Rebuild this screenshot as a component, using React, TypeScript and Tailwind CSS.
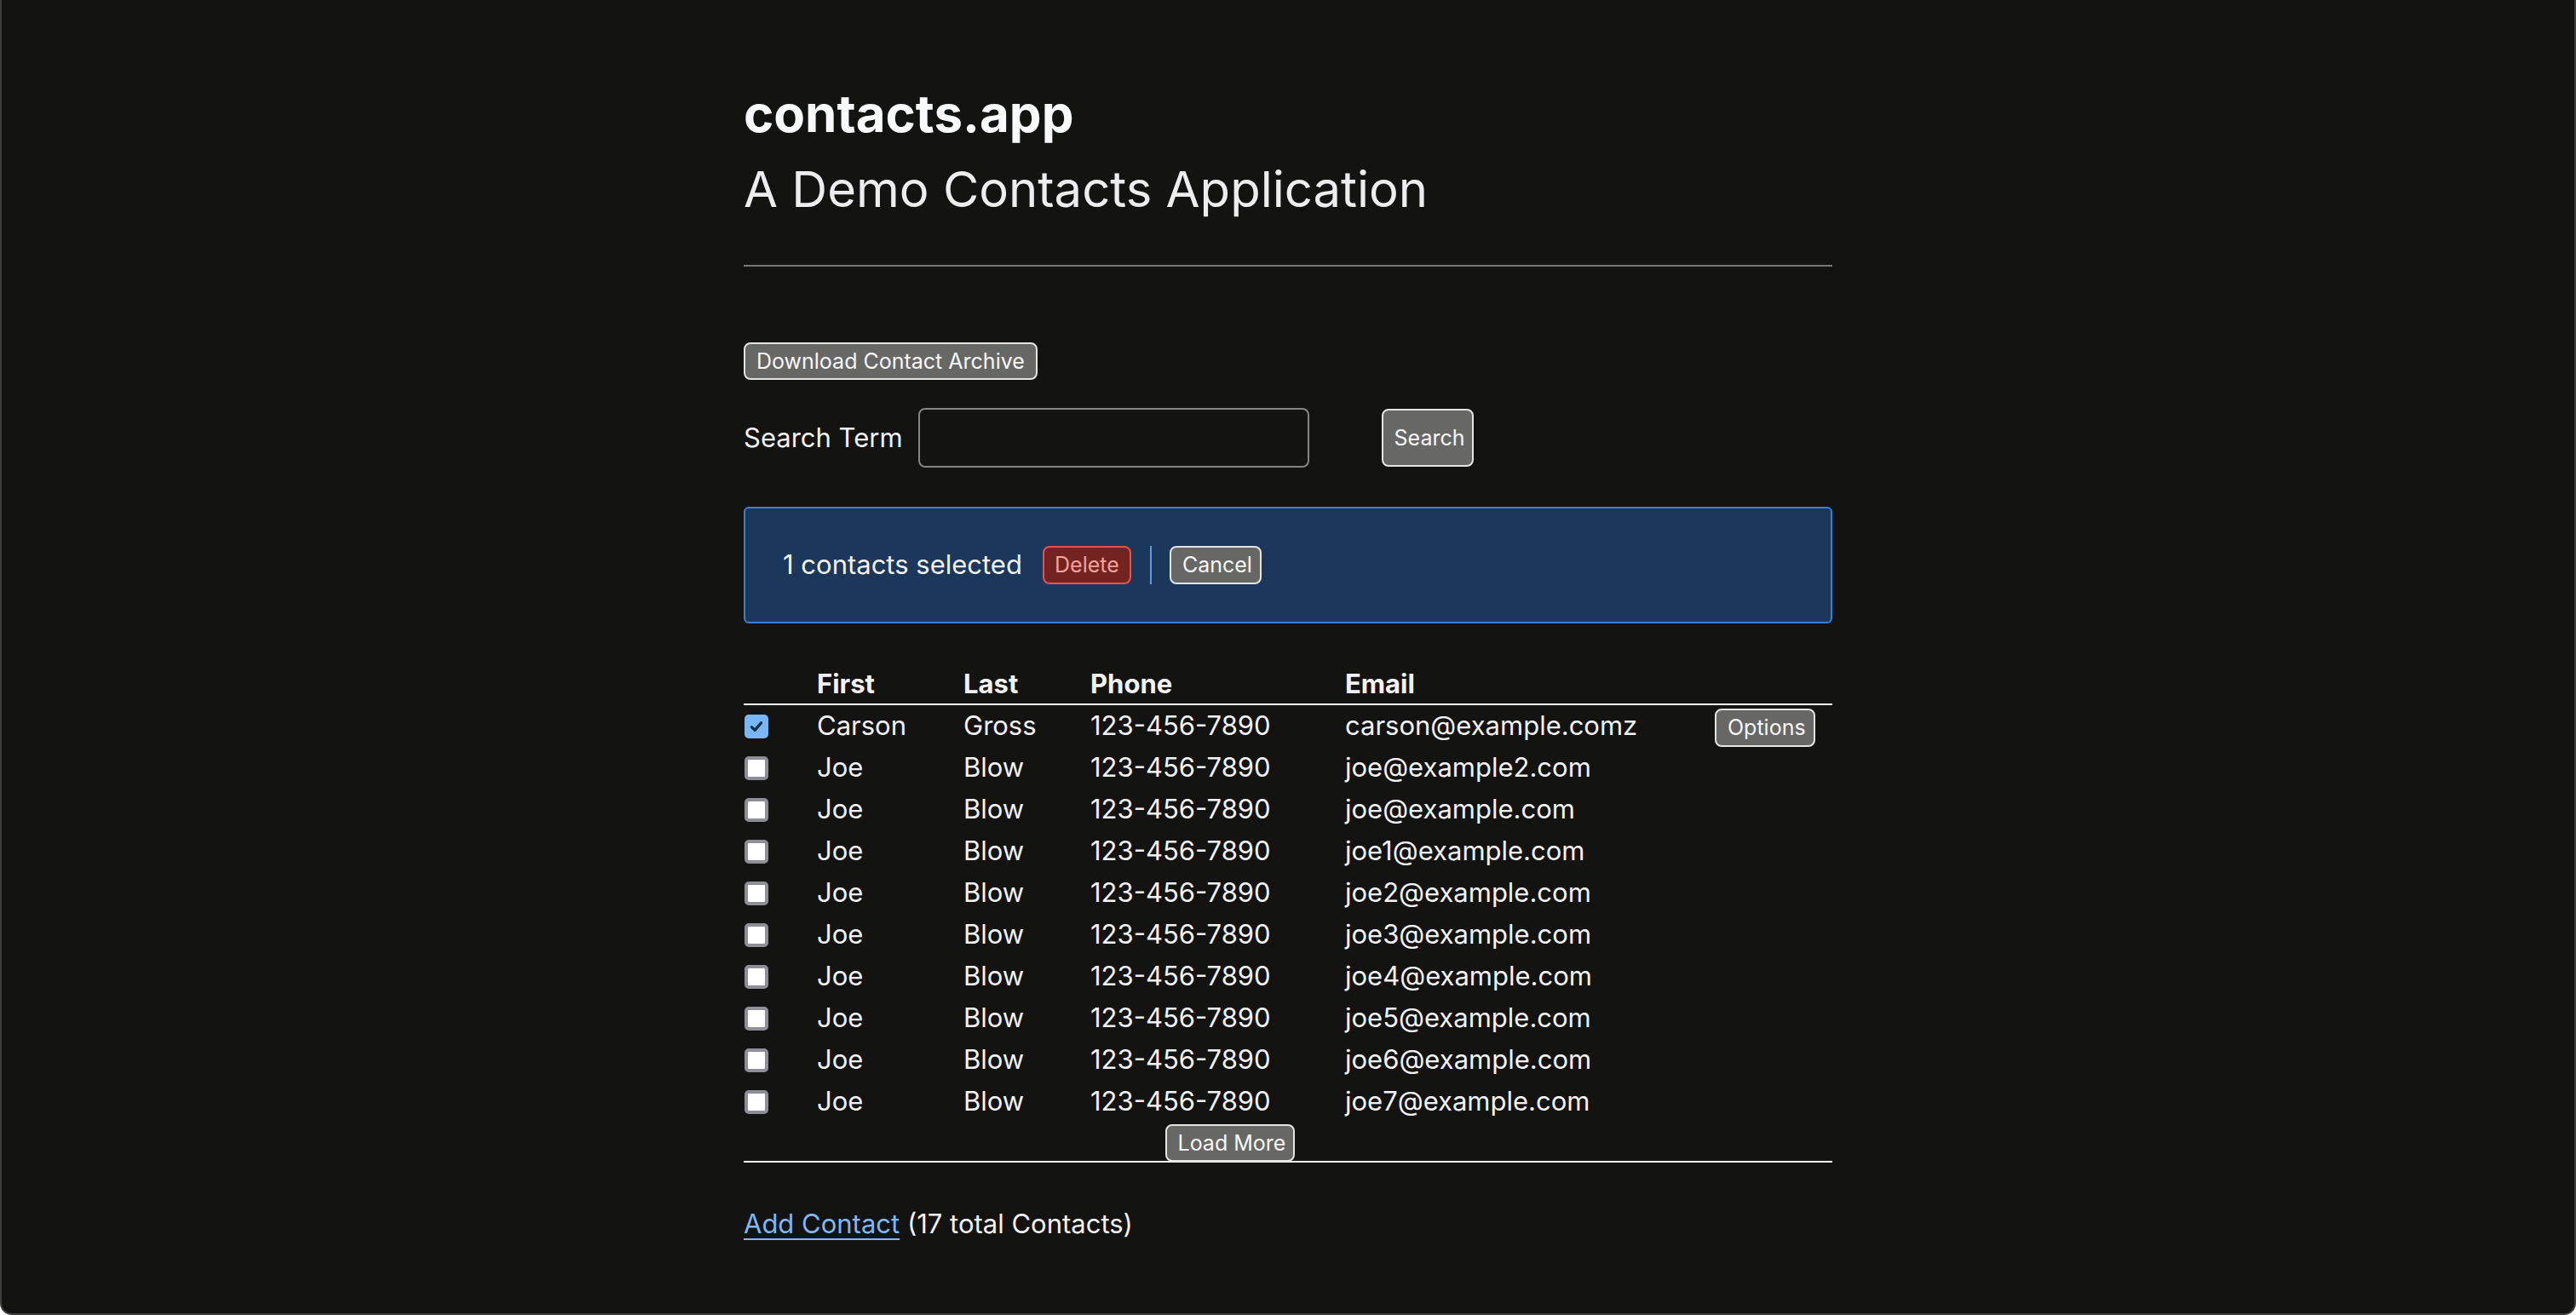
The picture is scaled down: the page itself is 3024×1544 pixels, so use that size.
import { useState } from "react";

const contacts = [
  { first: "Carson", last: "Gross", phone: "123-456-7890", email: "carson@example.comz" },
  { first: "Joe", last: "Blow", phone: "123-456-7890", email: "joe@example2.com" },
  { first: "Joe", last: "Blow", phone: "123-456-7890", email: "joe@example.com" },
  { first: "Joe", last: "Blow", phone: "123-456-7890", email: "joe1@example.com" },
  { first: "Joe", last: "Blow", phone: "123-456-7890", email: "joe2@example.com" },
  { first: "Joe", last: "Blow", phone: "123-456-7890", email: "joe3@example.com" },
  { first: "Joe", last: "Blow", phone: "123-456-7890", email: "joe4@example.com" },
  { first: "Joe", last: "Blow", phone: "123-456-7890", email: "joe5@example.com" },
  { first: "Joe", last: "Blow", phone: "123-456-7890", email: "joe6@example.com" },
  { first: "Joe", last: "Blow", phone: "123-456-7890", email: "joe7@example.com" },
];

const btn =
  "h-[44px] px-[13px] rounded-[8px] border-2 border-[#e4e4e4] bg-[#676866] text-[25px] text-[#f7f7f7] leading-none whitespace-nowrap";

const cols = "grid grid-cols-[86px_172px_149px_299px_435px_137px]";

function Checkbox({ checked, onClick }: { checked: boolean; onClick: () => void }) {
  if (checked) {
    return (
      <button
        onClick={onClick}
        className="w-[28px] h-[28px] rounded-[5px] bg-[#78b6f4] flex items-center justify-center"
      >
        <svg viewBox="0 0 16 16" className="w-[20px] h-[20px]" fill="none" stroke="#1a2c48" strokeWidth={2.6} strokeLinecap="round" strokeLinejoin="round">
          <path d="M3.5 8.5l3 3 6-7" />
        </svg>
      </button>
    );
  }
  return (
    <button
      onClick={onClick}
      className="w-[28px] h-[28px] rounded-[5px] border-[4px] border-[#8e8e98] bg-white"
    />
  );
}

export default function App() {
  const [selected, setSelected] = useState<boolean[]>(contacts.map((_, i) => i === 0));
  const count = selected.filter(Boolean).length;

  return (
    <div
      className="h-[1544px] bg-[#131312] border-x-2 border-b-2 border-[#3d3d3d] rounded-b-[14px] overflow-hidden text-[#f2f2f3]"
      style={{ fontFamily: "Inter, 'Liberation Sans', sans-serif" }}
    >
      <div className="w-[1278px] mx-auto pt-[97px]">
        {/* Header */}
        <h1 className="text-[60px] leading-[72px] font-bold text-[#f8f9fb]">contacts.app</h1>
        <h2 className="mt-[17px] text-[58px] leading-[72px] font-normal text-[#ededef]">
          A Demo Contacts Application
        </h2>
        <hr className="mt-[53px] border-0 h-[2px] bg-[#7a7a7a]" />

        {/* Toolbar */}
        <div className="mt-[89px]">
          <button className={btn}>Download Contact Archive</button>
        </div>
        <div className="mt-[33px] flex items-center h-[70px]">
          <label className="text-[31px]">Search Term</label>
          <input className="ml-[18px] w-[459px] h-[70px] rounded-[8px] border-2 border-[#858585] bg-transparent outline-none px-3 text-[31px]" />
          <button className={`${btn} ml-[85px] h-[68px] w-[108px] px-0`}>Search</button>
        </div>

        {/* Selection bar */}
        <div className="mt-[46px] h-[137px] rounded-[6px] border-2 border-[#3b7fd6] bg-[#1b375b] flex items-center pl-[44px]">
          <span className="text-[31px]">{count} contacts selected</span>
          <button className="ml-[24px] h-[45px] w-[104px] rounded-[8px] border-2 border-[#e5534b] bg-[#742420] text-[25px] text-[#f3a19c] leading-none">
            Delete
          </button>
          <div className="ml-[22px] w-[2px] h-[45px] bg-[#5b9be0]" />
          <button
            className={`${btn} ml-[21px] h-[45px] w-[108px] px-0`}
            onClick={() => setSelected(contacts.map(() => false))}
          >
            Cancel
          </button>
        </div>

        {/* Table */}
        <div className="mt-[48px]">
          <div className={`${cols} h-[48px] items-center text-[31px] font-bold border-b-2 border-white`}>
            <div />
            <div>First</div>
            <div>Last</div>
            <div>Phone</div>
            <div>Email</div>
            <div />
          </div>
          {contacts.map((c, i) => (
            <div key={i} className={`${cols} h-[49px] items-center text-[31px]`}>
              <div className="pl-[1px] flex items-center">
                <Checkbox
                  checked={selected[i]}
                  onClick={() => setSelected(selected.map((s, j) => (j === i ? !s : s)))}
                />
              </div>
              <div>{c.first}</div>
              <div>{c.last}</div>
              <div>{c.phone}</div>
              <div>{c.email}</div>
              <div>
                {i === 0 && (
                  <button className={`${btn} ml-[-1px] h-[45px] w-[118px] px-0`}>Options</button>
                )}
              </div>
            </div>
          ))}
          <div className="h-[47px] border-b-2 border-white grid grid-cols-[1141px_137px]">
            <div className="flex justify-center pt-[2px]">
              <button className={`${btn} w-[152px] px-0`}>Load More</button>
            </div>
            <div />
          </div>
        </div>

        {/* Footer */}
        <p className="mt-[52px] text-[31px] leading-[40px]">
          <a href="#" className="text-[#7cb9f5] underline underline-offset-[6px] decoration-2">
            Add Contact
          </a>{" "}
          (17 total Contacts)
        </p>
      </div>
    </div>
  );
}
